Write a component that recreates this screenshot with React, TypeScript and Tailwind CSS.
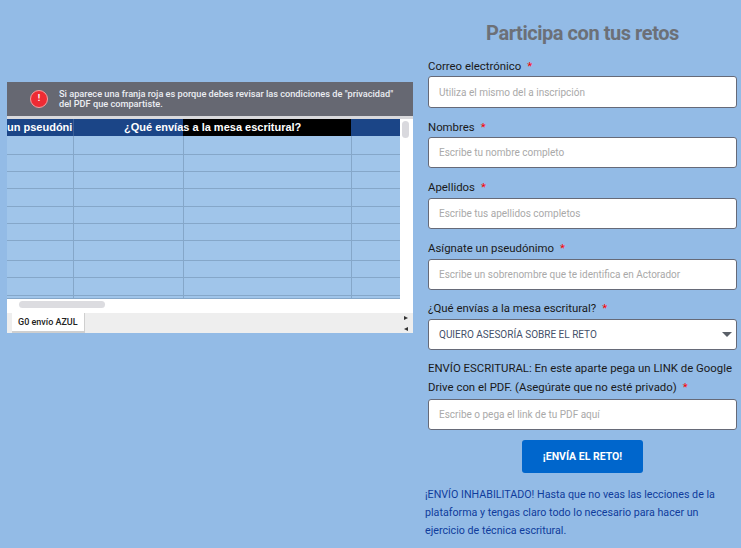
import React from 'react';

const rowHeights = [19, 17, 17, 18, 17, 17, 20, 17, 18, 3];

const fields = [
  { label: 'Correo electrónico', placeholder: 'Utiliza el mismo del a inscripción', gap: 'mt-0', labelHeight: 'h-[18px]', height: 'h-[32px]' },
  { label: 'Nombres', placeholder: 'Escribe tu nombre completo', gap: 'mt-[11px]', labelHeight: 'h-[18px]', height: 'h-[31px]' },
  { label: 'Apellidos', placeholder: 'Escribe tus apellidos completos', gap: 'mt-[11px]', labelHeight: 'h-[19px]', height: 'h-[31px]' },
  { label: 'Asígnate un pseudónimo', placeholder: 'Escribe un sobrenombre que te identifica en Actorador', gap: 'mt-[11px]', labelHeight: 'h-[19px]', height: 'h-[31px]' },
];

const Required = () => <span className="ml-[6px] text-[#ff0000]">*</span>;

const SheetPreview = () => (
  <div className="w-[406px] bg-white font-['Liberation_Sans',sans-serif]">
    {/* Privacy warning */}
    <div className="flex h-[34px] items-center bg-[#666872] pl-[23px] font-['Roboto',sans-serif]">
      <div className="flex h-[18px] w-[18px] items-center justify-center rounded-full border border-[#f4a0a0] bg-[#ee2b33] text-[9px] font-bold text-white">
        !
      </div>
      <p className="ml-[11px] text-[9.2px] leading-[10px] font-medium whitespace-nowrap text-[#eceef2]">
        Si aparece una franja roja es porque debes revisar las condiciones de "privacidad"
        <br />
        del PDF que compartiste.
      </p>
    </div>
    <div className="h-[3px] bg-[#d9d9dc]" />

    <div className="flex">
      <div className="w-[393px] overflow-hidden">
        {/* Header row */}
        <div className="flex h-[17px] text-[11px] leading-[17px] font-bold text-white">
          <div className="w-[66px] overflow-hidden bg-[#1b4587] whitespace-nowrap">un pseudóni</div>
          <div className="w-[278px] border-l border-[#3a5f98] bg-[linear-gradient(to_right,#1b4587_109px,#000000_109px)] pl-[50px] whitespace-nowrap">
            ¿Qué envías a la mesa escritural?
          </div>
          <div className="w-[49px] bg-[#1b4587]" />
        </div>
        {/* Empty rows */}
        {rowHeights.map((height, idx) => (
          <div key={idx} className="flex border-b border-[#85a7c9] bg-[#a0c5ea]" style={{ height }}>
            <div className="w-[67px] border-r border-[#85a7c9]" />
            <div className="w-[110px] border-r border-[#85a7c9]" />
            <div className="w-[168px] border-r border-[#85a7c9]" />
            <div className="w-[48px]" />
          </div>
        ))}
      </div>
      <div className="pt-[2px] pl-[2px]">
        <div className="h-[17px] w-[7px] rounded-[4px] bg-[#d9d9de]" />
      </div>
    </div>

    {/* Horizontal scrollbar */}
    <div className="h-[14px] pt-[2px] pl-[12px]">
      <div className="h-[7px] w-[86px] rounded-[4px] bg-[#dcdce0]" />
    </div>

    {/* Sheet tabs */}
    <div className="flex h-[20px] justify-between bg-[#eeeeee] pl-[5px]">
      <div className="h-[20px] w-[73px] border-r border-b-2 border-[#cfcfcf] bg-white pl-[6px] font-['Roboto',sans-serif] text-[9px] leading-[18px] font-medium whitespace-nowrap text-[#222222]">
        G0 envío AZUL
      </div>
      <div className="flex flex-col justify-center gap-[7px] pr-[5px]">
        <svg width="4" height="4" viewBox="0 0 4 4"><path d="M0 0L4 2L0 4Z" fill="#333333" /></svg>
        <svg width="4" height="4" viewBox="0 0 4 4"><path d="M4 0L0 2L4 4Z" fill="#333333" /></svg>
      </div>
    </div>
  </div>
);

const TextField = ({ placeholder, height }: { placeholder: string; height: string }) => (
  <input
    readOnly
    placeholder={placeholder}
    className={`${height} block w-[309px] rounded-[3px] border border-[#666a78] bg-white px-[10px] text-[10px] text-[#333333] outline-none placeholder:text-[#a9a9a9]`}
  />
);

export default function App() {
  return (
    <div className="flex h-screen overflow-hidden bg-[#93bbe6] font-['Roboto',sans-serif]">
      <div className="mt-[82px] ml-[7px]">
        <SheetPreview />
      </div>

      <div className="ml-[15px] w-[309px] text-[11.4px] text-[#1a1a1a]">
        <h1 className="mt-[20px] h-[38px] text-center text-[20px] leading-[26px] font-bold tracking-[-0.45px] text-[#6c7077]">
          Participa con tus retos
        </h1>

        {fields.map((field) => (
          <div key={field.label} className={field.gap}>
            <label className={`${field.labelHeight} block leading-[17px]`}>
              {field.label}
              <Required />
            </label>
            <TextField placeholder={field.placeholder} height={field.height} />
          </div>
        ))}

        {/* Select */}
        <div className="mt-[10px]">
          <label className="block h-[19px] leading-[17px]">
            ¿Qué envías a la mesa escritural?
            <Required />
          </label>
          <div className="flex h-[31px] w-[309px] items-center justify-between rounded-[3px] border border-[#666a78] bg-white pr-[4px] pl-[10px] text-[10px] text-[#44506a]">
            QUIERO ASESORÍA SOBRE EL RETO
            <svg width="10" height="5" viewBox="0 0 10 5"><path d="M0 0H10L5 5Z" fill="#5a6068" /></svg>
          </div>
        </div>

        {/* PDF link */}
        <div className="mt-[9px]">
          <label className="block leading-[19px]">
            ENVÍO ESCRITURAL: En este aparte pega un LINK de Google Drive con el PDF. (Asegúrate que no esté privado)
            <Required />
          </label>
          <div className="mt-[2px]">
            <TextField placeholder="Escribe o pega el link de tu PDF aquí" height="h-[31px]" />
          </div>
        </div>

        <button className="mx-auto mt-[10px] block h-[33px] w-[121px] rounded-[3px] bg-[#0066cc] text-[10.5px] font-bold text-white">
          ¡ENVÍA EL RETO!
        </button>

        <p className="mt-[13px] -ml-[3px] w-[300px] text-[10.7px] leading-[18px] text-[#0f3c9c]">
          ¡ENVÍO INHABILITADO! Hasta que no veas las lecciones de la plataforma y tengas claro todo lo necesario para hacer un ejercicio de técnica escritural.
        </p>
      </div>
    </div>
  );
}
